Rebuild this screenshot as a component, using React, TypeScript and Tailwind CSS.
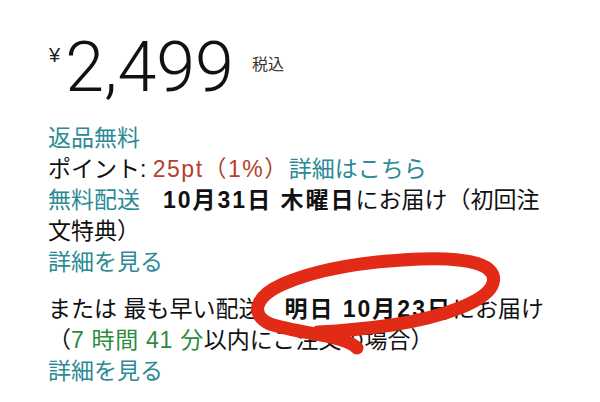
import React from 'react';

const bodyFont = { fontFamily: '"Liberation Sans", "Noto Sans CJK JP", sans-serif' };

function Link({ children }: { children: React.ReactNode }) {
  return <span className="text-[#2b8a96]">{children}</span>;
}

export default function App() {
  return (
    <div className="relative w-[600px] h-[402px] overflow-hidden bg-white text-[#111]" style={bodyFont}>
      {/* price */}
      <div className="flex items-start pl-[49px] pt-[32px]">
        <span className="text-[20px] leading-none mt-[13px] text-[#222]">¥</span>
        <span className="text-[70px] leading-none font-light ml-[5px]" style={{ fontFamily: 'Roboto, "Liberation Sans", sans-serif' }}>
          2,499
        </span>
        <span className="text-[16px] leading-none mt-[25px] ml-[18px] text-[#333]">税込</span>
      </div>

      {/* delivery info */}
      <div className="pl-[48px] mt-[21px] text-[23px] leading-[31px]">
        <div>
          <Link>返品無料</Link>
        </div>
        <div>
          ポイント: <span className="text-[#b3412b] tracking-[1.5px]">25pt（1%）</span>
          <Link>詳細はこちら</Link>
        </div>
        <div>
          <Link>無料配送</Link>　<span className="font-bold tracking-[2px]">10月31日 木曜日</span>にお届け（初回注
          <br />
          文特典）
        </div>
        <div>
          <Link>詳細を見る</Link>
        </div>

        <div className="mt-[16px]">
          または 最も早い配送　<span className="font-bold tracking-[2px]">明日 10月23日</span>にお届け
        </div>
        <div>
          （<span className="text-[#2e8b3e] tracking-[0.7px]">7 時間 41 分</span>以内にご注文の場合）
        </div>
        <div>
          <Link>詳細を見る</Link>
        </div>
      </div>

      {/* hand-drawn red circle */}
      <svg className="absolute inset-0 pointer-events-none" width="600" height="402" viewBox="0 0 600 402">
        <path
          d="M 357 348 C 345 335, 300 334, 270 324 C 250 315, 254 297, 283 284 C 320 268, 370 261, 420 259 C 470 257, 498 265, 493 283 C 488 301, 444 317, 392 325 C 364 329, 340 331, 318 332"
          fill="none"
          stroke="#e12b17"
          strokeWidth="13"
          strokeLinecap="round"
          strokeLinejoin="round"
        />
      </svg>
    </div>
  );
}
